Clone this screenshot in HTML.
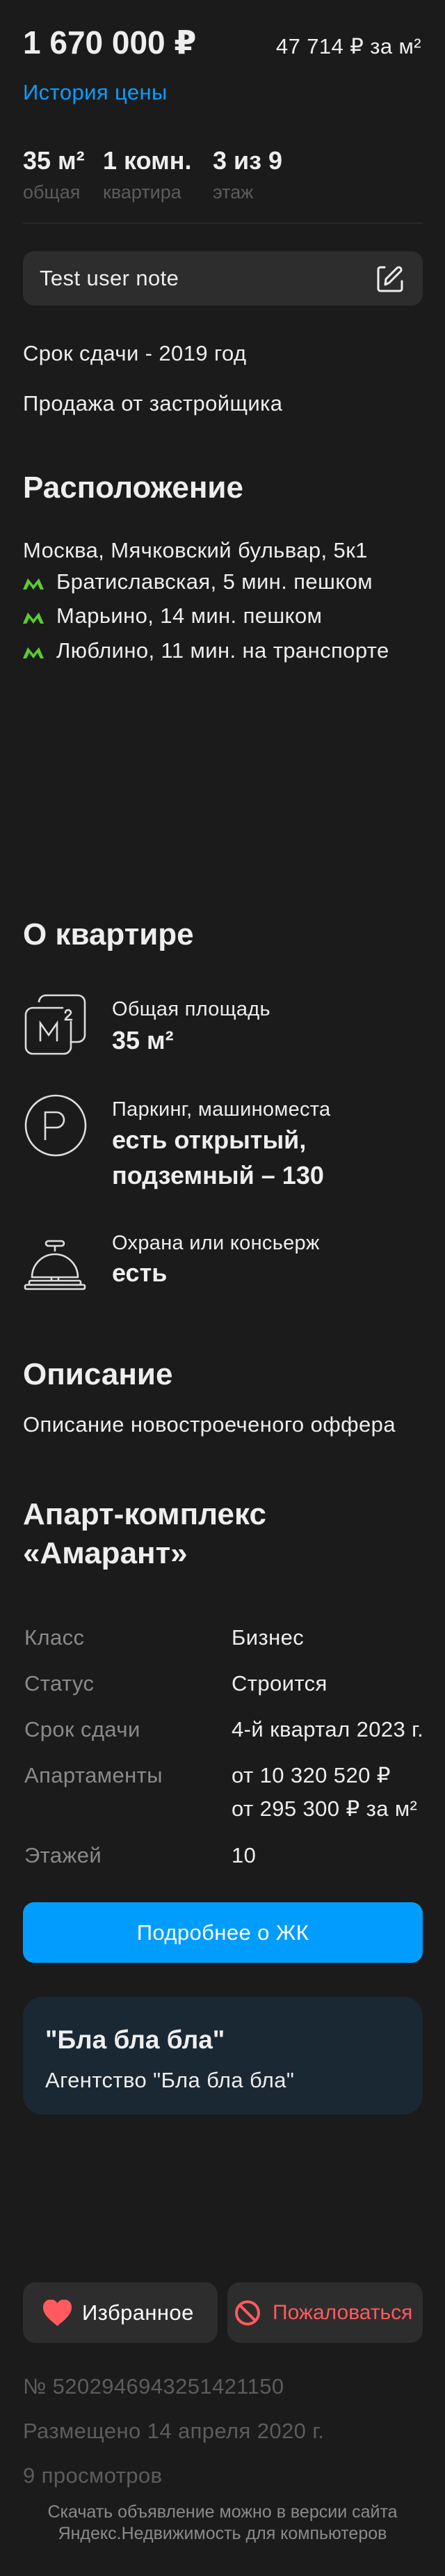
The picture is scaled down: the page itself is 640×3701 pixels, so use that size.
<!DOCTYPE html>
<html><head><meta charset="utf-8"><style>
*{margin:0;padding:0;box-sizing:border-box}
body{width:640px;height:3701px;background:#1b1b1b;position:relative;font-family:"Liberation Sans","DejaVu Sans",sans-serif;color:#eeeeee;overflow:hidden}
.a{position:absolute;line-height:1;white-space:nowrap}
.t{font-size:31px;letter-spacing:0.4px}
.b{font-weight:bold}
.g{color:#5c5c5c}
.l{color:#8a8a8a}
</style></head><body>
<div class="a b" style="left:33px;top:38px;font-size:46px">1 670 000 ₽</div>
<div class="a t" style="right:34px;top:51px">47 714 ₽ за м²</div>
<div class="a t" style="left:33px;top:117px;color:#0a9dff">История цены</div>

<div class="a b" style="left:33px;top:213px;font-size:36px">35 м²</div>
<div class="a b" style="left:148px;top:213px;font-size:36px">1 комн.</div>
<div class="a b" style="left:306px;top:213px;font-size:36px">3 из 9</div>
<div class="a g" style="left:33px;top:263px;font-size:27px">общая</div>
<div class="a g" style="left:148px;top:263px;font-size:27px">квартира</div>
<div class="a g" style="left:306px;top:263px;font-size:27px">этаж</div>
<div class="a" style="left:33px;top:320px;width:575px;height:1px;background:#333"></div>

<div class="a" style="left:33px;top:361px;width:575px;height:78px;background:#2d2d2d;border-radius:16px"></div>
<div class="a t" style="left:57px;top:384px">Test user note</div>
<svg class="a" style="left:540px;top:380px" width="42" height="42" viewBox="0 0 42 42" fill="none" stroke="#eee" stroke-width="3" stroke-linecap="round" stroke-linejoin="round">
<path d="M13 4H7a3 3 0 0 0-3 3v28a3 3 0 0 0 3 3h28a3 3 0 0 0 3-3V24"/>
<path d="M14 29l1-8L31 5a3.5 3.5 0 0 1 5 5L20 26z"/>
</svg>

<div class="a t" style="left:33px;top:492px">Срок сдачи - 2019 год</div>
<div class="a t" style="left:33px;top:564px">Продажа от застройщика</div>

<div class="a b" style="left:33px;top:679px;font-size:44px">Расположение</div>
<div class="a t" style="left:33px;top:775px">Москва, Мячковский бульвар, 5к1</div>
<svg class="a" style="left:33px;top:831px" width="30" height="16" viewBox="0 0 30 16"><path d="M0 16L7 0l8 10 8-10 7 16h-5L21 8l-6 8-6-8-4 8z" fill="#5ccb33"/></svg>
<div class="a t" style="left:81px;top:820px">Братиславская, 5 мин. пешком</div>
<svg class="a" style="left:33px;top:880px" width="30" height="16" viewBox="0 0 30 16"><path d="M0 16L7 0l8 10 8-10 7 16h-5L21 8l-6 8-6-8-4 8z" fill="#5ccb33"/></svg>
<div class="a t" style="left:81px;top:869px">Марьино, 14 мин. пешком</div>
<svg class="a" style="left:33px;top:930px" width="30" height="16" viewBox="0 0 30 16"><path d="M0 16L7 0l8 10 8-10 7 16h-5L21 8l-6 8-6-8-4 8z" fill="#5ccb33"/></svg>
<div class="a t" style="left:81px;top:919px">Люблино, 11 мин. на транспорте</div>

<div class="a b" style="left:33px;top:1321px;font-size:44px">О квартире</div>
<svg class="a" style="left:30px;top:1420px" width="100" height="100" viewBox="0 0 100 100" fill="none" stroke="#ddd" stroke-width="2.6" stroke-linecap="round">
<path d="M26 18V20a10 10 0 0 1 10-10h46a10 10 0 0 1 10 10v47a10 10 0 0 1-10 10h-10"/>
<path d="M60 28H17a10 10 0 0 0-10 10v46a10 10 0 0 0 10 10h45a10 10 0 0 0 10-10V48"/>
<path d="M28 75V50l12 17 12-17v25"/>
<path d="M64 35a4 4 0 0 1 8 0c0 3-8 7-8 10h9"/>
</svg>
<div class="a" style="left:161px;top:1436px;font-size:29px;letter-spacing:0.3px">Общая площадь</div>
<div class="a b" style="left:161px;top:1477px;font-size:36px">35 м²</div>

<svg class="a" style="left:34px;top:1571px" width="92" height="92" viewBox="0 0 92 92" fill="none" stroke="#ddd" stroke-width="2.6">
<circle cx="46" cy="46" r="43"/>
<path d="M31 67V27h16a11 11 0 0 1 0 22H31"/>
</svg>
<div class="a" style="left:161px;top:1580px;font-size:29px;letter-spacing:0.3px">Паркинг, машиноместа</div>
<div class="a b" style="left:161px;top:1620px;font-size:36px">есть открытый,</div>
<div class="a b" style="left:161px;top:1671px;font-size:36px">подземный – 130</div>

<svg class="a" style="left:34px;top:1780px" width="92" height="76" viewBox="0 0 92 76" fill="none" stroke="#ddd" stroke-width="2.6" stroke-linejoin="round">
<rect x="32" y="3" width="26" height="7" rx="3.5"/>
<path d="M45 10v8"/>
<path d="M12 55a33 33 0 0 1 66 0z"/>
<path d="M40 55v5M50 55v5"/>
<rect x="8" y="60" width="74" height="6" rx="2"/>
<rect x="2" y="66" width="86" height="6" rx="2"/>
</svg>
<div class="a" style="left:161px;top:1772px;font-size:29px;letter-spacing:0.3px">Охрана или консьерж</div>
<div class="a b" style="left:161px;top:1811px;font-size:36px">есть</div>

<div class="a b" style="left:33px;top:1953px;font-size:44px">Описание</div>
<div class="a t" style="left:33px;top:2031px">Описание новостроеченого оффера</div>

<div class="a b" style="left:33px;top:2154px;font-size:44px">Апарт-комплекс</div>
<div class="a b" style="left:33px;top:2210px;font-size:44px">«Амарант»</div>

<div class="a t l" style="left:35px;top:2337px">Класс</div>
<div class="a t" style="left:333px;top:2337px">Бизнес</div>
<div class="a t l" style="left:35px;top:2403px">Статус</div>
<div class="a t" style="left:333px;top:2403px">Строится</div>
<div class="a t l" style="left:35px;top:2469px">Срок сдачи</div>
<div class="a t" style="left:333px;top:2469px">4-й квартал 2023 г.</div>
<div class="a t l" style="left:35px;top:2535px">Апартаменты</div>
<div class="a t" style="left:333px;top:2535px">от 10 320 520 ₽</div>
<div class="a t" style="left:333px;top:2583px">от 295 300 ₽ за м²</div>
<div class="a t l" style="left:35px;top:2650px">Этажей</div>
<div class="a t" style="left:333px;top:2650px">10</div>

<div class="a t" style="left:33px;top:2733px;width:575px;height:87px;background:#009dff;border-radius:16px;color:#fff;display:flex;align-items:center;justify-content:center">Подробнее о ЖК</div>

<div class="a" style="left:33px;top:2869px;width:575px;height:169px;background:#1a2834;border-radius:28px"></div>
<div class="a b" style="left:65px;top:2912px;font-size:37px">"Бла бла бла"</div>
<div class="a t" style="left:65px;top:2973px">Агентство "Бла бла бла"</div>

<div class="a" style="left:33px;top:3279px;width:280px;height:87px;background:#2d2d2d;border-radius:18px"></div>
<svg class="a" style="left:62px;top:3304px" width="41" height="38" viewBox="0 0 41 38"><path d="M20.5 38C17 34 0 24 0 11.5A11 11 0 0 1 20.5 5 11 11 0 0 1 41 11.5C41 24 24 34 20.5 38z" fill="#ff5a5f"/></svg>
<div class="a t" style="left:118px;top:3307px;color:#fff">Избранное</div>
<div class="a" style="left:327px;top:3279px;width:281px;height:87px;background:#2d2d2d;border-radius:18px"></div>
<svg class="a" style="left:337px;top:3304px" width="38" height="38" viewBox="0 0 38 38" fill="none" stroke="#ff5a5f" stroke-width="4"><circle cx="19" cy="19" r="16"/><path d="M8 8l22 22"/></svg>
<div class="a" style="left:392px;top:3308px;font-size:30px;color:#ff5a5f">Пожаловаться</div>

<div class="a t g" style="left:33px;top:3413px">№ 5202946943251421150</div>
<div class="a t g" style="left:33px;top:3477px">Размещено 14 апреля 2020 г.</div>
<div class="a t g" style="left:33px;top:3541px">9 просмотров</div>
<div class="a" style="left:0;width:640px;text-align:center;top:3597px;font-size:25px;color:#8a8a8a">Скачать объявление можно в версии сайта</div>
<div class="a" style="left:0;width:640px;text-align:center;top:3628px;font-size:25px;color:#8a8a8a">Яндекс.Недвижимость для компьютеров</div>
</body></html>
